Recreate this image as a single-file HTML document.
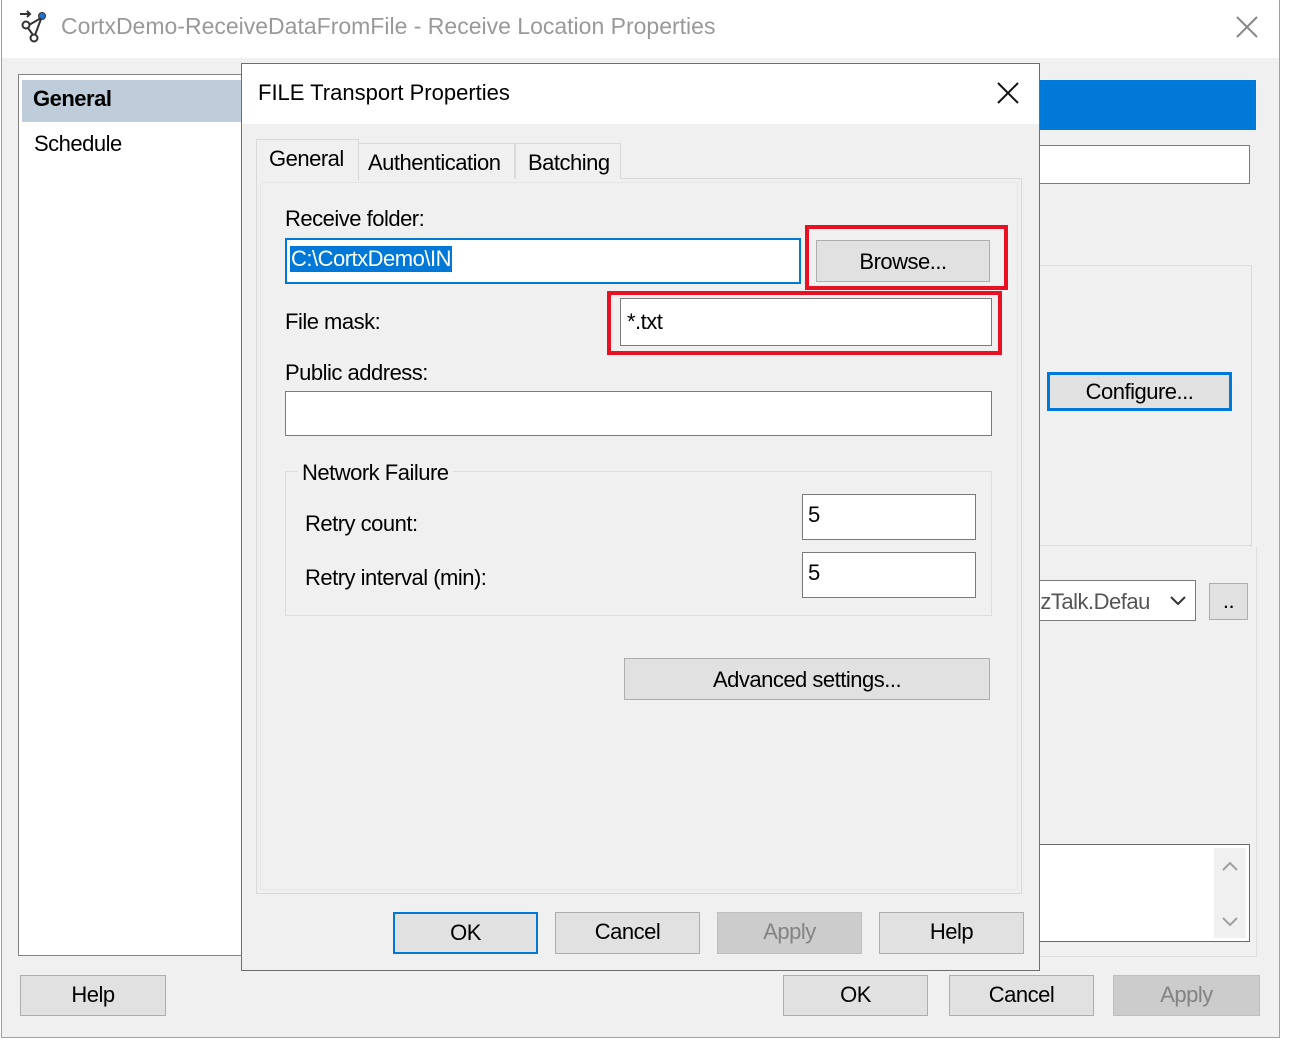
<!DOCTYPE html>
<html><head><style>
*{box-sizing:border-box;margin:0;padding:0}
body{width:1290px;height:1046px;background:#fff;position:relative;overflow:hidden;font-family:"Liberation Sans",sans-serif;font-size:22px;color:#000;letter-spacing:-0.5px}
.a{position:absolute}
.btn{position:absolute;background:#e1e1e1;border:1px solid #adadad;text-align:center;line-height:38px}
.dis{color:#838383;background:#cccccc;border-color:#bfbfbf}
.tb{position:absolute;background:#fff;border:1px solid #7a7a7a}
.t{position:absolute;white-space:nowrap}
.red{position:absolute;border:4px solid #e81123}
</style></head><body>
<div class="a" style="left:1px;top:0;width:1279px;height:1038px;border:1px solid #a0a0a0;border-top:none;background:#f0f0f0"></div>
<div class="a" style="left:2px;top:0;width:1277px;height:58px;background:#fff"></div>
<svg class="a" style="left:18px;top:10px" width="32" height="34" viewBox="0 0 32 34"><path d="M2 4h10M9 1l3 3-3 3" stroke="#333" stroke-width="2" fill="none"/><circle cx="8" cy="15" r="3.5" stroke="#333" stroke-width="2" fill="none"/><circle cx="16" cy="28" r="3.5" stroke="#333" stroke-width="2" fill="none"/><circle cx="24" cy="6" r="3.5" fill="#1e6fd0" stroke="#333" stroke-width="1"/><path d="M11 15l12-7M10 18l5 7M23 9l-6 16" stroke="#333" stroke-width="2" fill="none"/></svg>
<div class="t" style="left:61px;top:13px;color:#999;font-size:23px;letter-spacing:0">CortxDemo-ReceiveDataFromFile - Receive Location Properties</div>
<svg class="a" style="left:1236px;top:16px" width="22" height="22"><path d="M1 1L21 21M21 1L1 21" stroke="#888" stroke-width="2"/></svg>
<div class="a" style="left:18px;top:74px;width:226px;height:882px;background:#fff;border:1px solid #828282"></div>
<div class="a" style="left:22px;top:80px;width:220px;height:42px;background:#bfcddb"></div>
<div class="t" style="left:33px;top:86px;font-weight:bold">General</div>
<div class="t" style="left:34px;top:131px">Schedule</div>
<div class="a" style="left:1039px;top:80px;width:217px;height:50px;background:#0078d7"></div>
<div class="tb" style="left:1030px;top:145px;width:220px;height:39px"></div>
<div class="a" style="left:1030px;top:265px;width:222px;height:281px;border:1px solid #dcdcdc"></div>
<div class="btn" style="left:1047px;top:372px;width:185px;height:39px;border:3px solid #0078d7;line-height:33px">Configure...</div>
<div class="tb" style="left:1030px;top:580px;width:166px;height:41px;overflow:hidden"><span class="t" style="left:5px;top:8px;color:#555">izTalk.Defau</span><svg class="a" style="left:138px;top:14px" width="18" height="12"><path d="M2 2l7 7 7-7" stroke="#333" stroke-width="2" fill="none"/></svg></div>
<div class="btn" style="left:1209px;top:583px;width:39px;height:37px;line-height:34px">..</div>
<div class="a" style="left:1030px;top:547px;width:227px;height:410px;border-right:1px solid #dcdcdc;border-bottom:1px solid #dcdcdc"></div>
<div class="tb" style="left:1030px;top:844px;width:220px;height:98px;border-color:#6a6a6a"></div>
<div class="a" style="left:1214px;top:848px;width:32px;height:90px;background:#f0f0f0"></div>
<svg class="a" style="left:1220px;top:858px" width="20" height="74"><path d="M3 12l7-7 7 7M3 60l7 7 7-7" stroke="#a0a0a0" stroke-width="2" fill="none"/></svg>
<div class="btn" style="left:20px;top:975px;width:146px;height:41px">Help</div>
<div class="btn" style="left:783px;top:975px;width:145px;height:41px">OK</div>
<div class="btn" style="left:949px;top:975px;width:145px;height:41px">Cancel</div>
<div class="btn dis" style="left:1113px;top:975px;width:147px;height:41px">Apply</div>
<div class="a" style="left:241px;top:63px;width:799px;height:908px;background:#f0f0f0;border:1px solid #6e6e6e"></div>
<div class="a" style="left:242px;top:64px;width:797px;height:60px;background:#fff"></div>
<div class="t" style="left:258px;top:80px;letter-spacing:0">FILE Transport Properties</div>
<svg class="a" style="left:997px;top:82px" width="22" height="22"><path d="M1 1L21 21M21 1L1 21" stroke="#111" stroke-width="2"/></svg>
<div class="a" style="left:256px;top:178px;width:766px;height:716px;border:1px solid #dadada;background:#f0f0f0"></div>
<div class="a" style="left:260px;top:182px;width:758px;height:708px;border:1px solid #e6e6e6;background:#f0f0f0"></div>
<div class="a" style="left:358px;top:143px;width:157px;height:36px;border:1px solid #dadada;border-bottom:none;background:#f0f0f0"></div>
<div class="a" style="left:515px;top:143px;width:106px;height:36px;border:1px solid #dadada;border-bottom:none;background:#f0f0f0"></div>
<div class="a" style="left:256px;top:139px;width:103px;height:42px;border:1px solid #dadada;border-bottom:none;background:#f0f0f0"></div>
<div class="t" style="left:269px;top:146px">General</div>
<div class="t" style="left:368px;top:150px">Authentication</div>
<div class="t" style="left:528px;top:150px">Batching</div>
<div class="t" style="left:285px;top:206px">Receive folder:</div>
<div class="tb" style="left:285px;top:238px;width:516px;height:46px;border:2px solid #0078d7"><span class="t" style="left:3px;top:6px;background:#0078d7;color:#fff;padding:0 1px">C:\CortxDemo\IN</span></div>
<div class="btn" style="left:816px;top:240px;width:174px;height:42px;line-height:42px">Browse...</div>
<div class="red" style="left:805px;top:225px;width:203px;height:65px"></div>
<div class="t" style="left:285px;top:309px">File mask:</div>
<div class="tb" style="left:620px;top:298px;width:372px;height:48px"><span class="t" style="left:6px;top:10px">*.txt</span></div>
<div class="red" style="left:607px;top:291px;width:395px;height:64px"></div>
<div class="t" style="left:285px;top:360px">Public address:</div>
<div class="tb" style="left:285px;top:391px;width:707px;height:45px"></div>
<div class="a" style="left:285px;top:471px;width:707px;height:145px;border:1px solid #dcdcdc"></div>
<div class="t" style="left:298px;top:460px;background:#f0f0f0;padding:0 4px">Network Failure</div>
<div class="t" style="left:305px;top:511px">Retry count:</div>
<div class="tb" style="left:802px;top:494px;width:174px;height:46px"><span class="t" style="left:5px;top:7px">5</span></div>
<div class="t" style="left:305px;top:565px">Retry interval (min):</div>
<div class="tb" style="left:802px;top:552px;width:174px;height:46px"><span class="t" style="left:5px;top:7px">5</span></div>
<div class="btn" style="left:624px;top:658px;width:366px;height:42px;line-height:42px">Advanced settings...</div>
<div class="btn" style="left:393px;top:912px;width:145px;height:42px;border:2px solid #0078d7">OK</div>
<div class="btn" style="left:555px;top:912px;width:145px;height:42px">Cancel</div>
<div class="btn dis" style="left:717px;top:912px;width:145px;height:42px">Apply</div>
<div class="btn" style="left:879px;top:912px;width:145px;height:42px">Help</div>
</body></html>
